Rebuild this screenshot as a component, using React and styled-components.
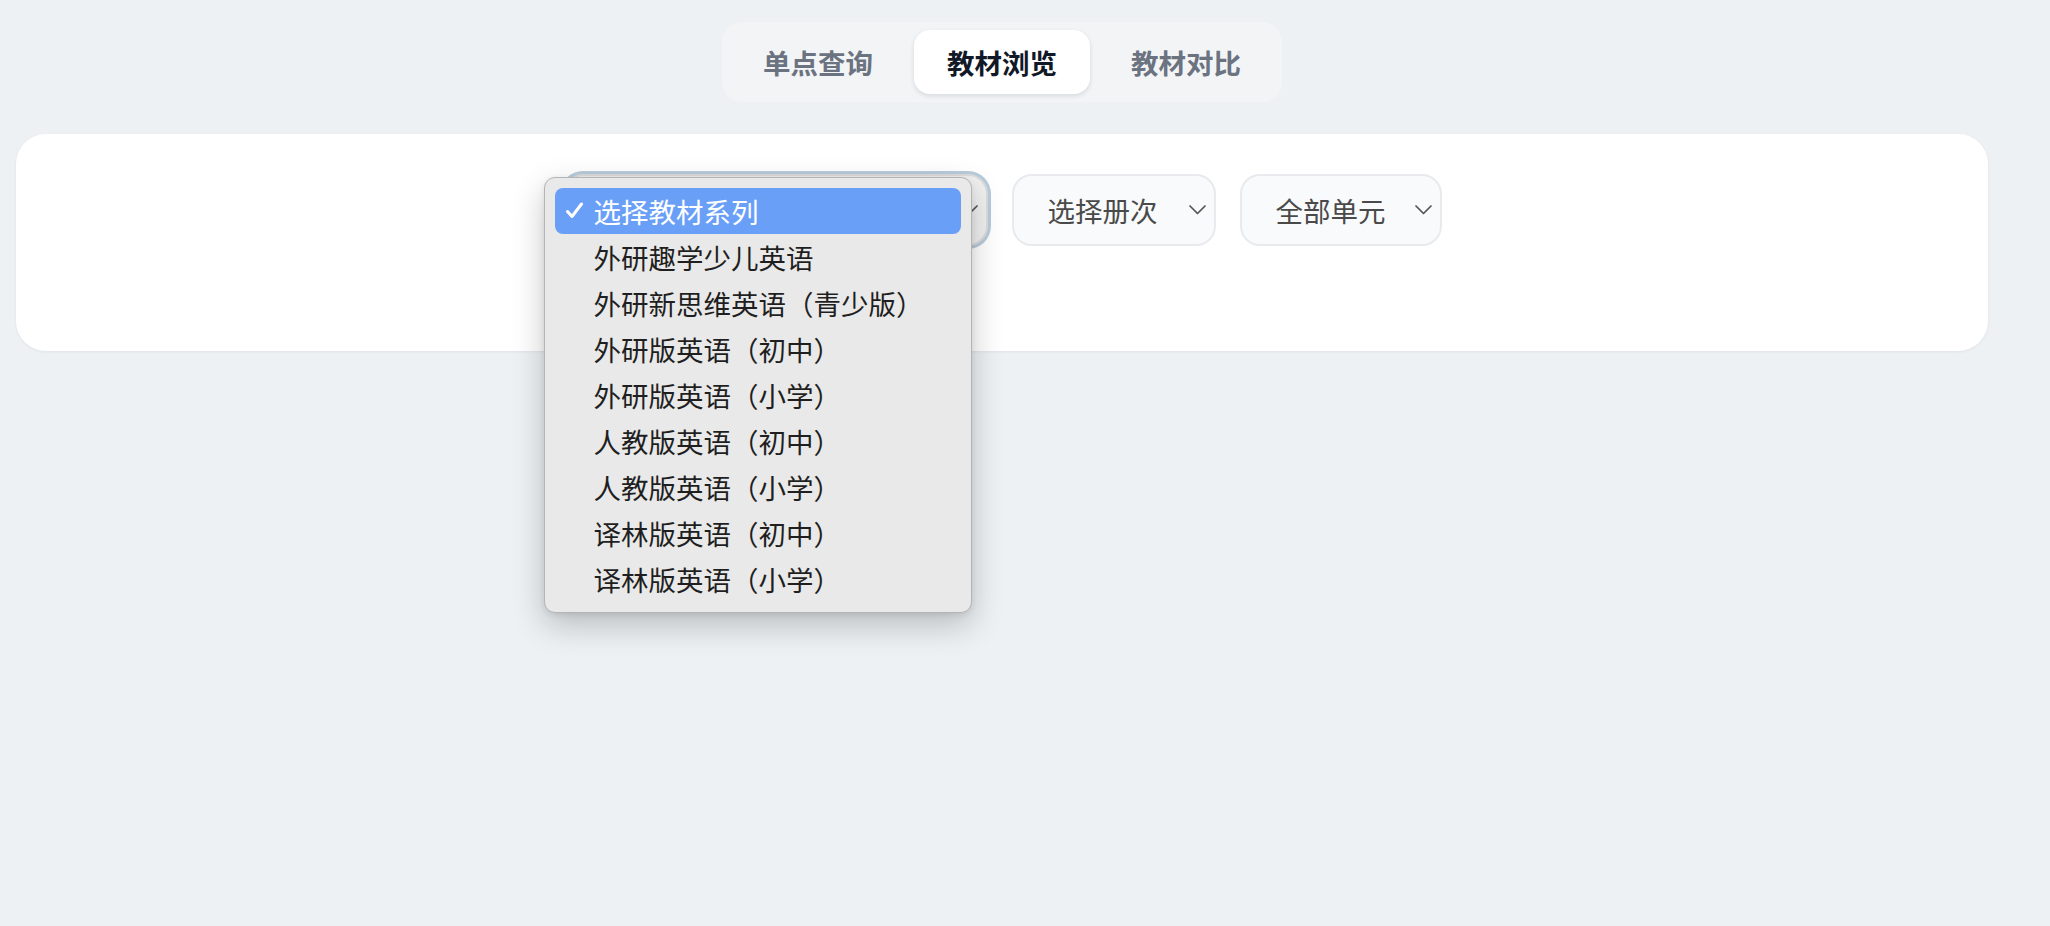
import React from "react";
import styled, { createGlobalStyle, css } from "styled-components";

const GlobalStyle = createGlobalStyle`
  html, body {
    margin: 0;
    padding: 0;
    background: #edf1f4;
    font-family: "Noto Sans CJK SC", "Noto Sans", sans-serif;
  }

  * {
    box-sizing: border-box;
  }
`;

const Page = styled.div`
  display: flex;
  flex-direction: column;
  min-height: 100vh;
  padding: 22px 62px 0 16px;
`;

const TabBar = styled.nav`
  align-self: center;
  display: flex;
  gap: 8px;
  padding: 8px;
  border-radius: 20px;
  background: #f2f4f6;
`;

const Tab = styled.button`
  width: 176px;
  height: 64px;
  border: 0;
  border-radius: 16px;
  background: transparent;
  font-family: inherit;
  font-size: 27.5px;
  font-weight: 700;
  color: #6b7280;
  cursor: pointer;

  ${({ $active }) =>
    $active &&
    css`
      background: #ffffff;
      color: #111827;
      box-shadow: 0 2px 5px rgba(15, 23, 42, 0.12);
    `}
`;

const Panel = styled.section`
  margin-top: 32px;
  height: 217px;
  padding: 40px;
  border-radius: 30px;
  background: #ffffff;
  box-shadow: 0 1px 3px rgba(15, 23, 42, 0.06);
`;

const FilterRow = styled.div`
  display: flex;
  justify-content: center;
  gap: 24px;
`;

const SelectWrap = styled.div`
  position: relative;
`;

const SelectBox = styled.div`
  display: flex;
  align-items: center;
  justify-content: space-between;
  width: ${({ $width }) => $width}px;
  height: 72px;
  padding: 0 8px 0 34px;
  border: 2px solid #e8eaee;
  border-radius: 20px;
  background: #f9fafb;
  font-size: 27.5px;
  color: #4a4a4a;

  ${({ $open }) =>
    $open &&
    css`
      border-color: #dcdcdc;
      background: #f0f0f0;
      box-shadow: 0 0 0 3px #b8cbdb;
    `}
`;

/* the open select's own label sits under the menu, like a native popup */
const SelectLabel = styled.span`
  visibility: ${({ $hidden }) => ($hidden ? "hidden" : "visible")};
`;

const Chevron = styled.svg`
  flex: none;
  width: 17px;
  height: 10px;
  color: #555555;
`;

const Menu = styled.ul`
  position: absolute;
  left: -19px;
  top: 3px;
  z-index: 10;
  width: 428px;
  margin: 0;
  padding: 10px;
  list-style: none;
  border: 1px solid #b4b4b4;
  border-radius: 11px;
  background: #e9e9e9;
  box-shadow: 0 12px 32px rgba(0, 0, 0, 0.22), 0 2px 6px rgba(0, 0, 0, 0.08);
`;

const MenuItem = styled.li`
  position: relative;
  display: flex;
  align-items: center;
  height: 46px;
  padding-left: 39px;
  border-radius: 8px;
  font-size: 27.5px;
  color: #1f1f1f;
  white-space: nowrap;

  ${({ $selected }) =>
    $selected &&
    css`
      background: #6a9ff8;
      color: #ffffff;
    `}
`;

const Check = styled.svg`
  position: absolute;
  left: 10px;
  top: 14px;
  width: 19px;
  height: 17px;
`;

const tabs = ["单点查询", "教材浏览", "教材对比"];

const series = [
  "选择教材系列",
  "外研趣学少儿英语",
  "外研新思维英语（青少版）",
  "外研版英语（初中）",
  "外研版英语（小学）",
  "人教版英语（初中）",
  "人教版英语（小学）",
  "译林版英语（初中）",
  "译林版英语（小学）",
];

function ChevronDown() {
  return (
    <Chevron viewBox="0 0 17 10" fill="none">
      <path d="M1 1l7.5 7.5L16 1" stroke="currentColor" strokeWidth="1.7" strokeLinecap="round" strokeLinejoin="round" />
    </Chevron>
  );
}

function Select({ width, label, open, children }) {
  return (
    <SelectWrap>
      <SelectBox $width={width} $open={open}>
        <SelectLabel $hidden={open}>{label}</SelectLabel>
        <ChevronDown />
      </SelectBox>
      {children}
    </SelectWrap>
  );
}

export default function App() {
  return (
    <>
      <GlobalStyle />
      <Page>
        <TabBar>
          {tabs.map((t) => (
            <Tab key={t} $active={t === "教材浏览"}>
              {t}
            </Tab>
          ))}
        </TabBar>

        <Panel>
          <FilterRow>
            <Select width={425} label="选择教材系列" open>
              <Menu>
                {series.map((s, i) => (
                  <MenuItem key={s} $selected={i === 0}>
                    {i === 0 && (
                      <Check viewBox="0 0 19 17" fill="none">
                        <path d="M2.5 9.5l4.5 5L16.5 2" stroke="#ffffff" strokeWidth="3" strokeLinecap="round" strokeLinejoin="round" />
                      </Check>
                    )}
                    {s}
                  </MenuItem>
                ))}
              </Menu>
            </Select>
            <Select width={204} label="选择册次" />
            <Select width={202} label="全部单元" />
          </FilterRow>
        </Panel>
      </Page>
    </>
  );
}
